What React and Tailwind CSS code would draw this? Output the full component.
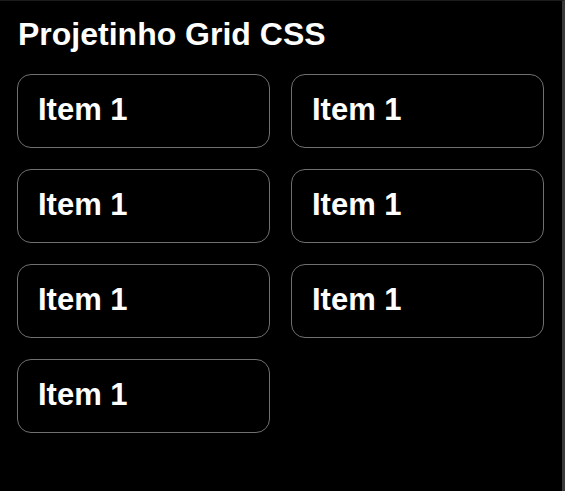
import React from 'react';

const items = Array.from({ length: 7 }, (_, i) => i);

export default function App() {
  return (
    <div
      className="w-[565px] h-[491px] bg-black text-white border-t border-t-[#1c1c1c] border-r-[3px] border-r-[#3a3a3a] overflow-hidden"
      style={{ fontFamily: '"Liberation Sans", Arial, sans-serif' }}
    >
      <div className="pl-[17px] pr-[18px] pt-[15px]">
        <h1 className="text-[32px] font-bold leading-[37px] ml-[1px]">Projetinho Grid CSS</h1>
        <div className="grid grid-cols-2 gap-x-[21px] gap-y-[21px] mt-[21px]">
          {items.map(i => (
            <div
              key={i}
              className="h-[74px] rounded-[14px] border border-[#707070] flex items-center pl-[20px] pb-[4px]"
            >
              <span className="text-[31px] font-bold leading-none">Item 1</span>
            </div>
          ))}
        </div>
      </div>
    </div>
  );
}
